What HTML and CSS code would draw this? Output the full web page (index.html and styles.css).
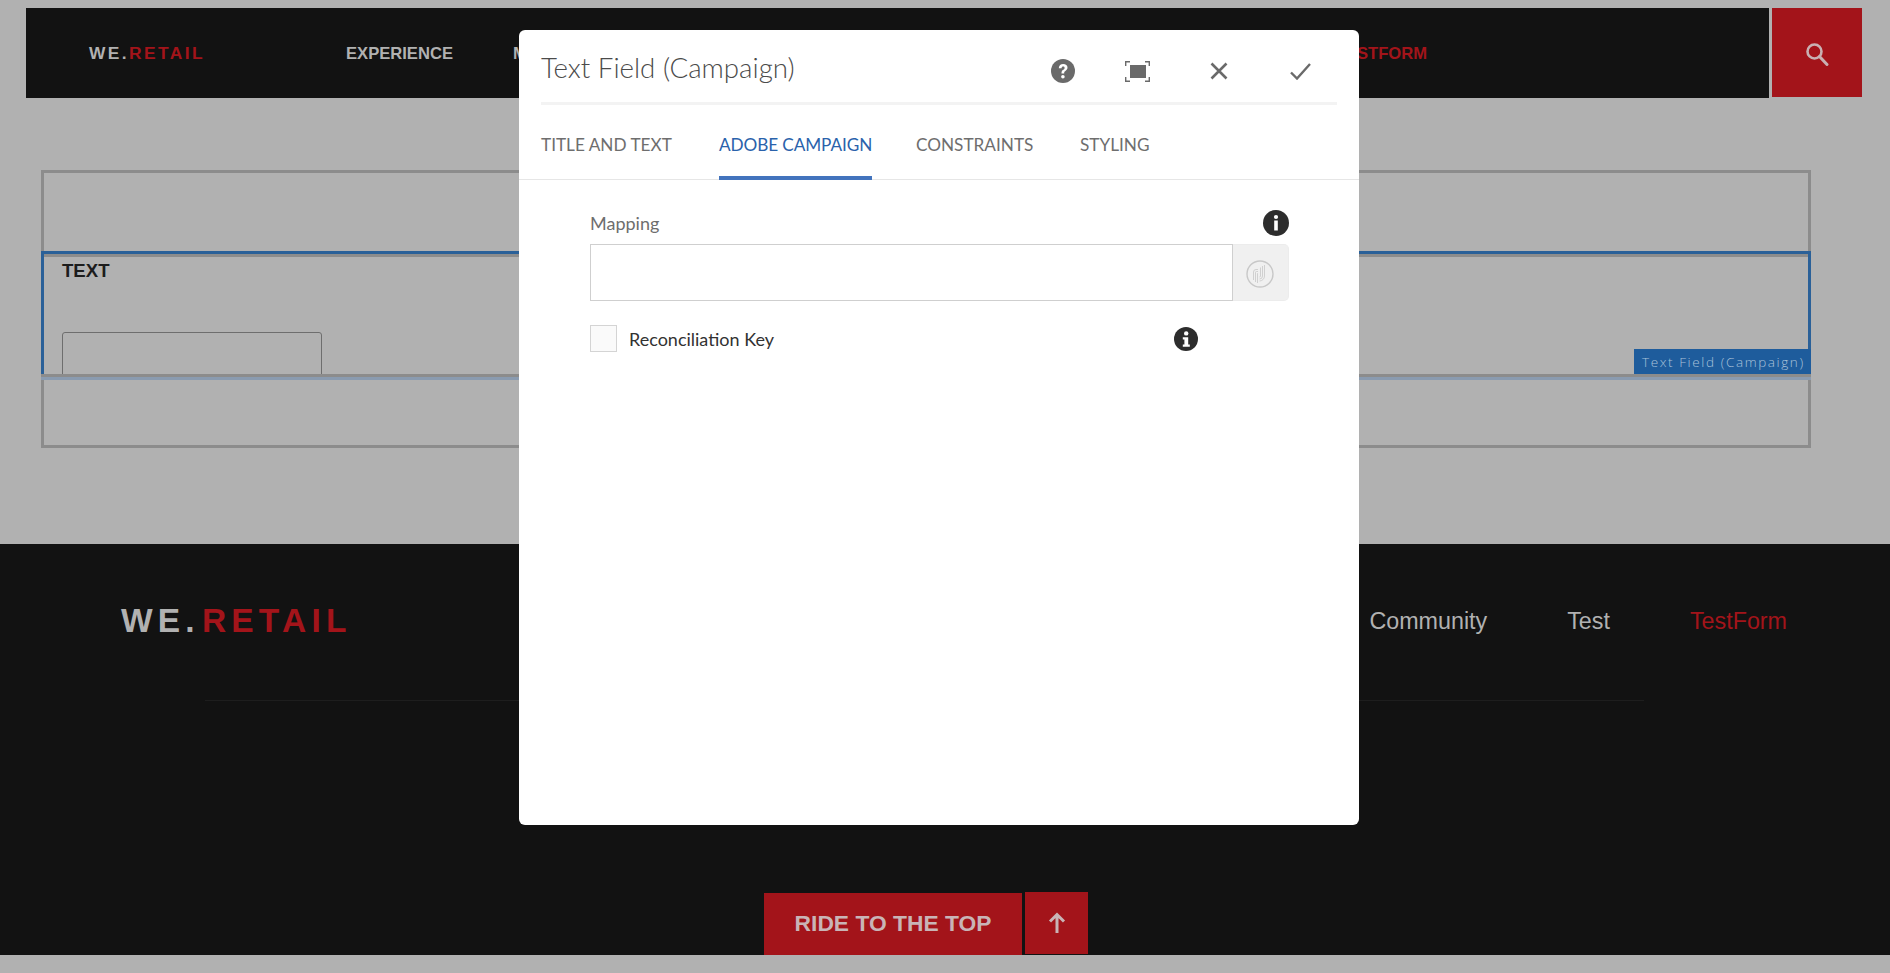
FILE: index.html
```html
<!DOCTYPE html>
<html lang="en">
<head>
<meta charset="utf-8">
<title>Text Field (Campaign)</title>
<link rel="stylesheet" href="styles.css">
</head>
<body>
<header class="top">
  <div class="top-bar">
    <a class="logo-small">WE.<span class="red">RETAIL</span></a>
    <nav class="top-nav">
      <a>EXPERIENCE</a><a>MEN</a>
      <a class="red push">TESTFORM</a>
    </nav>
  </div>
  <button class="search" aria-label="Search">
    <svg width="24" height="24" viewBox="0 0 24 24" fill="none" stroke="#c9b0b2" stroke-width="2.6"><circle cx="9.5" cy="9.5" r="7"/><path d="M14.5 14.5 22 22.5" stroke-linecap="round" stroke-width="3"/></svg>
  </button>
</header>

<main class="stage">
  <section class="layout">
    <div class="slot-empty"></div>
    <div class="selected">
      <div class="selected-inner">
        <h2 class="text-label">TEXT</h2>
        <div class="fake-input"></div>
      </div>
      <span class="tag">Text Field (Campaign)</span>
    </div>
  </section>
</main>

<footer class="foot">
  <div class="foot-row">
    <a class="logo-big">WE.<span class="red">RETAIL</span></a>
    <nav class="foot-nav"><a>Community</a><a>Test</a><a class="red">TestForm</a></nav>
  </div>
  <div class="foot-rule"></div>
  <div class="ride">
    <a class="ride-text">RIDE TO THE TOP</a>
    <a class="ride-arrow" aria-label="Top">
      <svg width="18" height="22" viewBox="0 0 18 22" fill="none" stroke="#c9b4b6" stroke-width="3"><path d="M9 21V3M2 9.5 9 2.5l7 7"/></svg>
    </a>
  </div>
</footer>

<div class="dialog">
  <div class="dialog-head">
    <h1 class="dialog-title">Text Field (Campaign)</h1>
    <div class="dialog-tools">
      <svg class="t-help" width="24" height="24" viewBox="0 0 24 24"><circle cx="12" cy="12" r="12" fill="#6a6a6a"/><path d="M7.800 9.200C7.800 6.600 9.700 5 12.200 5c2.500 0 4.300 1.400 4.300 3.600 0 1.800-1 2.600-2.100 3.400-.9.600-1.200 1-1.200 1.900v.5h-2.700V14c0-1.700.6-2.500 1.800-3.300.9-.6 1.300-1 1.300-1.800 0-.8-.6-1.300-1.400-1.300-1 0-1.600.6-1.600 1.600z" fill="#fff"/><circle cx="11.900" cy="17.800" r="1.800" fill="#fff"/></svg>
      <svg class="t-full" width="25" height="21" viewBox="0 0 25 21" fill="none"><rect x="5" y="4" width="16" height="13" fill="#6a6a6a"/><path d="M.7 5V.7H5M20 .7h4.300V5M.7 16v4.300H5M20 20.300h4.300V16" stroke="#6a6a6a" stroke-width="1.400"/></svg>
      <svg class="t-close" width="18" height="18" viewBox="0 0 18 18" fill="none" stroke="#6a6a6a" stroke-width="2.600"><path d="M1.500 1.500 16.500 16.500M16.500 1.500 1.500 16.500"/></svg>
      <svg class="t-check" width="21" height="17" viewBox="0 0 21 17" fill="none" stroke="#6a6a6a" stroke-width="2.400"><path d="M1 9.500 7 15.500 20 1"/></svg>
    </div>
  </div>
  <div class="tabs">
    <a class="tab tab-1">TITLE AND TEXT</a>
    <a class="tab tab-2 active">ADOBE CAMPAIGN</a>
    <a class="tab tab-3">CONSTRAINTS</a>
    <a class="tab">STYLING</a>
  </div>
  <form class="dialog-body">
    <div class="field-head">
      <label class="field-label">Mapping</label>
      <svg width="26" height="26" viewBox="0 0 26 26"><circle cx="13" cy="13" r="13" fill="#2d2d2d"/><circle cx="13" cy="7" r="2.100" fill="#fff"/><rect x="11.200" y="10.500" width="3.600" height="10" fill="#fff"/></svg>
    </div>
    <div class="picker">
      <div class="picker-input"></div>
      <div class="picker-btn">
        <svg width="28" height="28" viewBox="0 0 28 28" fill="none" stroke="#c8c8c8" stroke-width="0.800"><circle cx="14" cy="14" r="13" stroke-width="1.400"/><path d="M18.500 5V16a5 5 0 0 1-5 5M16.500 6V16a3 3 0 0 1-3 3M14.500 7.500V16a1 1 0 0 1-1 1M12 9.500H10a2.500 2.500 0 0 0-2.500 2.500V20M12 11.500h-1.500a1 1 0 0 0-1 1V22M12 13.500h-.5V23"/></svg>
      </div>
    </div>
    <div class="check-row">
      <span class="checkbox"></span>
      <span class="check-label">Reconciliation Key</span>
      <svg class="check-info" width="24" height="24" viewBox="0 0 24 24"><circle cx="12" cy="12" r="12" fill="#2d2d2d"/><circle cx="12.200" cy="6.400" r="2.200" fill="#fff"/><path d="M8.800 10.200h5.400v7.300h1.600v2.200H8.800v-2.200h1.600v-5.100H8.800z" fill="#fff"/></svg>
    </div>
  </form>
</div>
</body>
</html>
```

FILE: styles.css
```css
* { box-sizing: border-box; }
html, body { margin: 0; padding: 0; }
body {
  position: relative;
  height: 973px;
  overflow: hidden;
  padding-top: 8px;
  background: #b1b1b1;
  font-family: "Liberation Sans", Arial, sans-serif;
}
.red { color: #a3141a; }

/* top bar */
.top { display: flex; align-items: flex-start; gap: 3px; margin-left: 26px; }
.top-bar {
  display: flex;
  align-items: center;
  width: 1743px;
  height: 90px;
  padding: 1px 0 0 63px;
  background: #121212;
}
.logo-small {
  width: 257px;
  font-size: 17.400px;
  font-weight: 700;
  letter-spacing: 2.400px;
  color: #b1b1b1;
}
.top-nav {
  display: flex;
  flex: 1;
  gap: 60px;
  padding-right: 342px;
  font-size: 16.600px;
  font-weight: 700;
  color: #b1b1b1;
  white-space: nowrap;
}
.top-nav .push { margin-left: auto; }
.search {
  display: flex;
  align-items: center;
  justify-content: center;
  width: 90px;
  height: 89px;
  padding: 2px 0 0;
  border: 0;
  background: #a3141a;
}

/* page body behind the dialog */
.stage { padding: 72px 0 96px 41px; }
.layout {
  display: flex;
  flex-direction: column;
  width: 1770px;
  height: 278px;
  border: 3px solid #8c8c8c;
}
.slot-empty { height: 78px; }
.selected {
  position: relative;
  height: 123px;
  margin: 0 -3px;
  border: 3px solid #2a6098;
  border-bottom: 0;
  box-shadow: 0 3px 0 #8c8c8c, 0 6px 0 #8a9bb0;
}
.selected-inner {
  height: 120px;
  padding: 3px 0 0 18px;
  overflow: hidden;
  border-top: 3px solid #8c8c8c;
}
.text-label {
  margin: 0;
  font-size: 18.600px;
  line-height: 21px;
  font-weight: 700;
  color: #1c1c1c;
}
.fake-input {
  width: 260px;
  height: 60px;
  margin-top: 51px;
  border: 1px solid #6e6e6e;
  border-radius: 3px;
}
.tag {
  position: absolute;
  right: -3px;
  bottom: 0;
  width: 177px;
  height: 25px;
  padding-left: 8px;
  background: #1e5c9c;
  color: #a9c2da;
  font: 300 13.500px/27px "Open Sans", sans-serif;
  letter-spacing: 1.600px;
  white-space: nowrap;
}

/* footer */
.foot {
  display: flex;
  flex-direction: column;
  height: 411px;
  background: #121212;
}
.foot-row {
  display: flex;
  align-items: center;
  justify-content: space-between;
  height: 156px;
  padding: 0 103px 2px 121px;
}
.logo-big {
  font-size: 33.500px;
  font-weight: 700;
  letter-spacing: 5.200px;
  color: #b1b1b1;
}
.logo-big .red { margin-left: 2px; }
.foot-nav {
  display: flex;
  gap: 80px;
  font-size: 23.300px;
  color: #b1b1b1;
}
.foot-rule {
  height: 1px;
  margin: 0 246px 0 205px;
  background: #1e1e1e;
}
.ride { display: flex; gap: 3px; margin: 192px 0 0 764px; align-items: flex-start; }
.ride-text {
  display: block;
  width: 258px;
  height: 62px;
  background: #a3141a;
  color: #c9b4b6;
  font-size: 22.800px;
  font-weight: 700;
  line-height: 60px;
  text-align: center;
  white-space: nowrap;
}
.ride-arrow {
  display: flex;
  align-items: center;
  justify-content: center;
  width: 63px;
  height: 62px;
  margin-top: -1px;
  background: #a3141a;
}

/* dialog */
.dialog {
  position: absolute;
  top: 30px;
  left: 519px;
  width: 840px;
  height: 795px;
  border-radius: 6px;
  background: #fff;
}
.dialog-head {
  display: flex;
  align-items: center;
  height: 75px;
  margin: 0 22px;
  border-bottom: 3px solid #f3f3f3;
}
.dialog-title {
  margin: 0;
  padding-top: 4px;
  font: 300 27.700px/1 "Lato", sans-serif;
  color: #4b4b4b;
  white-space: nowrap;
}
.dialog-tools { display: flex; align-items: center; margin-left: auto; padding-top: 10px; }
.t-help { margin-right: 50px; }
.t-full { margin-right: 60px; }
.t-close { margin-right: 62px; }
.t-check { margin-right: 26px; }
.tabs {
  display: flex;
  height: 75px;
  padding-left: 22px;
  border-bottom: 1px solid #e6e6e6;
}
.tab {
  display: flex;
  align-items: center;
  height: 75px;
  padding-top: 3px;
  font: 400 17.200px "Lato", sans-serif;
  color: #6e6e6e;
  white-space: nowrap;
}
.tab-1 { width: 178px; }
.tab-2 { width: 153px; margin-right: 44px; letter-spacing: -0.100px; }
.tab-3 { width: 164px; }
.tab.active { color: #2a62ab; border-bottom: 4px solid #4273bd; padding-top: 7px; }
.dialog-body { padding: 0 70px 0 71px; }
.field-head {
  display: flex;
  align-items: center;
  justify-content: space-between;
  height: 26px;
  margin-top: 30px;
}
.field-label { font: 400 18px "Lato", sans-serif; color: #6e6e6e; }
.picker { display: flex; height: 57px; margin-top: 8px; }
.picker-input {
  width: 643px;
  border: 1px solid #cfcfcf;
  background: #fff;
}
.picker-btn {
  display: flex;
  align-items: center;
  justify-content: center;
  width: 56px;
  padding: 3px 1px 0 0;
  border: 1px solid #ececec;
  border-left: 0;
  border-radius: 0 5px 5px 0;
  background: #f0f0f0;
}
.check-row { display: flex; align-items: center; margin-top: 24px; height: 27px; }
.checkbox {
  width: 27px;
  height: 27px;
  border: 1px solid #d4d4d4;
  background: #fafafa;
}
.check-label {
  margin-left: 12px;
  font: 400 18px "Lato", sans-serif;
  color: #323232;
  white-space: nowrap;
}
.check-info { margin-left: auto; margin-right: 91px; }
```
